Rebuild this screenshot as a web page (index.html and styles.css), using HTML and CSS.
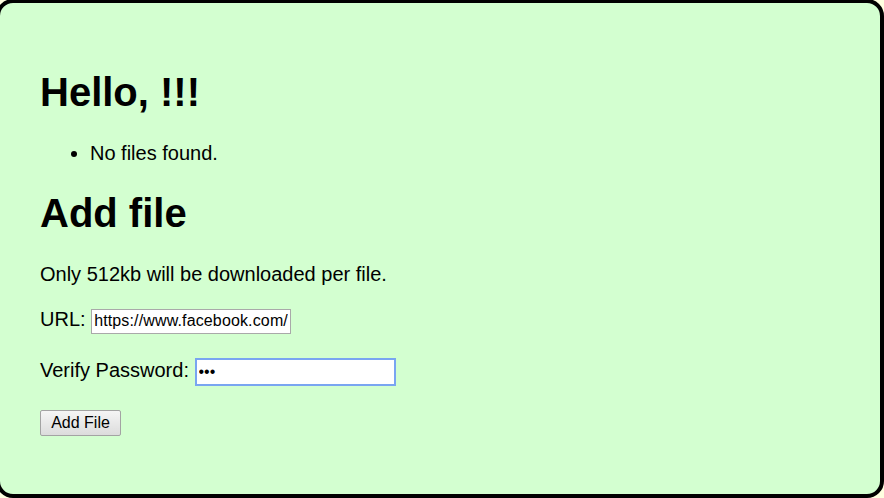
FILE: index.html
```html
<!DOCTYPE html>
<html>
<head>
<meta charset="utf-8">
<title>Files</title>
<link rel="stylesheet" href="styles.css">
</head>
<body>
<div class="box">
  <h1>Hello, !!!</h1>
  <ul class="files">
    <li>No files found.</li>
  </ul>
  <h1>Add file</h1>
  <p>Only 512kb will be downloaded per file.</p>
  <form class="form">
    <p class="row">URL: <input class="field url" type="text" value="https://www.facebook.com/favicon.ico"></p>
    <p class="row">Verify Password: <input class="field focused" type="password" value="abc"></p>
    <p class="row"><button class="btn" type="button">Add File</button></p>
  </form>
</div>
</body>
</html>
```

FILE: styles.css
```css
html, body {
  margin: 0;
  padding: 0;
  background: #ffffe0;
  overflow: hidden;
}
body {
  font-family: "Liberation Sans", Arial, sans-serif;
  font-size: 20px;
  color: #000;
}
.box {
  box-sizing: border-box;
  margin: -1px 0 0 -4px;
  height: 499px;
  border: 4px solid #000;
  border-radius: 17px;
  background: #d3ffd0;
  padding: 40px 37px 0 40px;
}
h1 {
  font-size: 40px;
  margin: 26.8px 0;
}
.files {
  margin: 20px 0;
  padding-left: 50px;
}
p {
  margin: 20px 0;
}
.form {
  margin: -2px 0 0 0;
}
.row {
  margin: 24px 0;
}
.field {
  box-sizing: border-box;
  font-family: "Liberation Sans", Arial, sans-serif;
  font-size: 16px;
  width: 200px;
  height: 25px;
  padding: 1px 2px;
  border: 1px solid #a9a9a9;
  background: #fff;
  color: #000;
  margin: 0;
}
.url {
  letter-spacing: 0.14px;
}
.focused {
  width: 201px;
  height: 28px;
  border: 2px solid #79a5f1;
  outline: none;
}
.btn {
  box-sizing: border-box;
  font-family: "Liberation Sans", Arial, sans-serif;
  font-size: 16px;
  height: 26px;
  width: 81px;
  padding: 0 8px;
  margin: 0;
  border: 1px solid #a3a3a3;
  border-radius: 2px;
  background: linear-gradient(#f5f5f5, #dcdcdc);
  color: #000;
}
```
